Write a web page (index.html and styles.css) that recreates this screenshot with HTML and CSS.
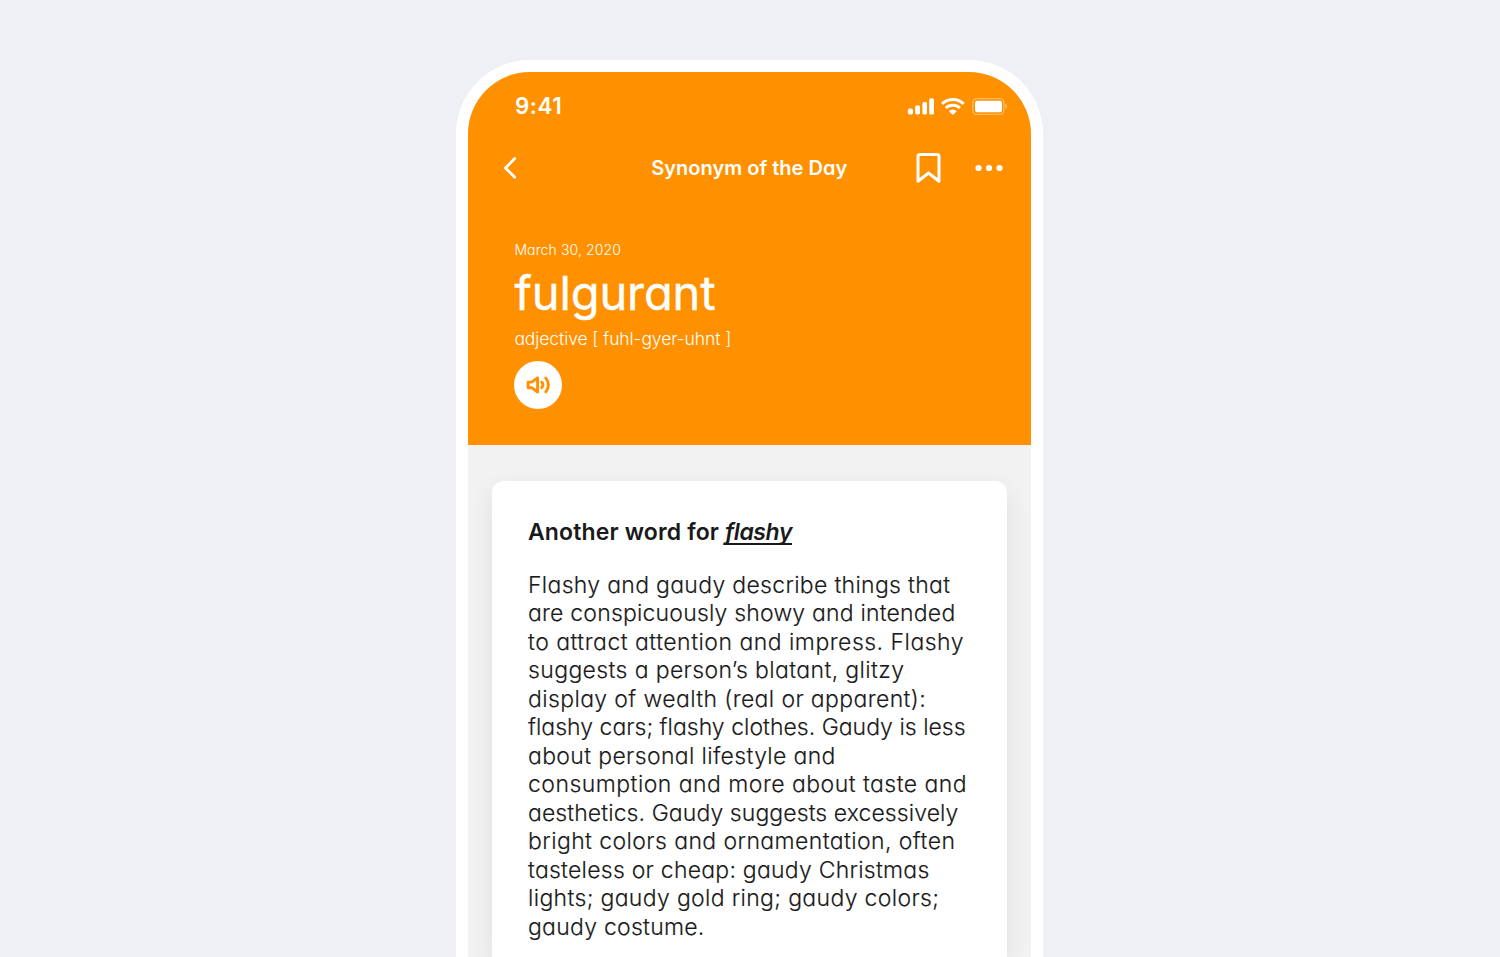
FILE: index.html
```html
<!DOCTYPE html>
<html lang="en">
<head>
<meta charset="utf-8">
<title>Synonym of the Day</title>
<link rel="stylesheet" href="styles.css">
</head>
<body>
<main class="phone">
  <header class="hero">
    <div class="status">
      <span class="time">9:41</span>
      <svg class="status-icons" width="102" height="20" viewBox="0 0 102 20" fill="#fff">
        <rect x="1.8" y="12.4" width="5.2" height="6.2" rx="1.8"/>
        <rect x="9.2" y="9.3" width="4.800" height="9.3" rx="1.8"/>
        <rect x="16.4" y="6" width="4.600" height="12.6" rx="1.7"/>
        <rect x="23.2" y="2.2" width="4.8" height="16.4" rx="1.7"/>
        <g fill="none" stroke="#fff" stroke-width="3">
          <path d="M36 7.800a15.800 15.800 0 0 1 21.700 0"/>
          <path d="M39.800 12a10.200 10.200 0 0 1 14.100 0"/>
        </g>
        <path d="M42.800 15.200a5.800 5.800 0 0 1 8 0L46.800 19z"/>
        <rect x="66.8" y="2.6" width="31" height="15.8" rx="4" fill="none" stroke="#fff" stroke-opacity=".38" stroke-width="1.4"/>
        <rect x="69" y="4.8" width="27" height="11.4" rx="2.2"/>
        <path d="M99.3 7.6c2.3 1 2.3 4.6 0 5.600z" fill-opacity=".42"/>
      </svg>
    </div>
    <nav class="nav">
      <svg class="back" width="16" height="26" viewBox="0 0 16 26" fill="none" stroke="#fff" stroke-width="2.800" stroke-linecap="round" stroke-linejoin="round"><path d="M12.700 3.600L3.500 13l9.200 9.300"/></svg>
      <h1 class="title">Synonym of the Day</h1>
      <div class="actions">
        <svg width="27" height="32" viewBox="0 0 27 32" fill="none" stroke="#fff" stroke-width="3" stroke-linejoin="round"><path d="M5 2.500h17q2 0 2 2v24.700l-10.500-8.200L3 29.200V4.500q0-2 2-2z"/></svg>
        <svg width="28" height="8" viewBox="0 0 28 8" fill="#fff"><circle cx="3.500" cy="4" r="3.100"/><circle cx="14" cy="4" r="3.100"/><circle cx="24.500" cy="4" r="3.100"/></svg>
      </div>
    </nav>
    <section class="entry">
      <p class="date">March 30, 2020</p>
      <h2 class="word">fulgurant</h2>
      <p class="pron">adjective [ fuhl-gyer-uhnt ]</p>
      <button class="sound" aria-label="Listen">
        <svg width="24" height="20" viewBox="0 0 24 20" fill="none" stroke="#ff9100" stroke-width="2.900" stroke-linecap="round" stroke-linejoin="round"><path d="M2.100 7.100h3.600l5.900-4.300v14.200l-5.900-4.300H2.100z"/><path d="M15.800 7.200q2.300 2.700 0 5.400M19.800 3q5.200 6.900 0 13.800"/></svg>
      </button>
    </section>
  </header>
  <article class="card">
    <h3 class="heading">Another word for <em class="term">flashy</em></h3>
    <p class="body">
      <span class="line l1">Flashy and gaudy describe things that</span>
      <span class="line l2">are conspicuously showy and intended</span>
      <span class="line l3">to attract attention and impress. Flashy</span>
      <span class="line l4">suggests a person’s blatant, glitzy</span>
      <span class="line l5">display of wealth (real or apparent):</span>
      <span class="line l6">flashy cars; flashy clothes. Gaudy is less</span>
      <span class="line l7">about personal lifestyle and</span>
      <span class="line l8">consumption and more about taste and</span>
      <span class="line l9">aesthetics. Gaudy suggests excessively</span>
      <span class="line l10">bright colors and ornamentation, often</span>
      <span class="line l11">tasteless or cheap: gaudy Christmas</span>
      <span class="line l12">lights; gaudy gold ring; gaudy colors;</span>
      <span class="line l13">gaudy costume.</span>
    </p>
  </article>
</main>
</body>
</html>
```
FILE: styles.css
```css
* { box-sizing: border-box; margin: 0; padding: 0; }
body {
  height: 957px;
  overflow: hidden;
  padding: 60px 0 0 456px;
  background: #eff0f5;
  font-family: Inter, sans-serif;
  font-feature-settings: "cv11";
  color: #1a1a1a;
}
.phone {
  display: flex;
  flex-direction: column;
  width: 586.5px;
  height: 897px;
  border: 12px solid #fff;
  border-bottom: 0;
  border-radius: 74px 74px 0 0;
  background: #f2f2f2;
  overflow: hidden;
}
.hero {
  flex: none;
  height: 373.4px;
  background: #ff9100;
  color: #fff;
}
.status {
  display: flex;
  align-items: center;
  justify-content: space-between;
  height: 68px;
  padding: 0 22.5px 0 47px;
}
.time { padding-bottom: 1px; font-size: 22.4px; font-weight: 600; letter-spacing: .5px; }
.nav {
  display: grid;
  grid-template-columns: 1fr auto 1fr;
  align-items: center;
  height: 56px;
  padding: 0 28px 0 33.5px;
}
.title { padding: 1.500px 5.500px 0 0; font-size: 20px; font-weight: 600; line-height: 25px; white-space: nowrap; }
.actions { display: flex; align-items: center; justify-content: flex-end; gap: 32.7px; }
.entry { padding: 44px 46.4px 0; }
.date { font-size: 14px; line-height: 20px; font-weight: 300; letter-spacing: .12px; }
.word { font-size: 47px; line-height: 66px; font-weight: 430; letter-spacing: -.1px; -webkit-text-stroke: .4px #fff; }
.pron { font-size: 17.5px; line-height: 25px; font-weight: 300; letter-spacing: -.09px; }
.sound {
  display: flex;
  align-items: center;
  justify-content: center;
  width: 48px;
  height: 48px;
  margin-top: 10.400px;
  border: 0;
  border-radius: 50%;
  background: #fff;
}
.card {
  flex: 1;
  margin: 36px 24px 0;
  padding: 35px 36px 0;
  border-radius: 12px 12px 0 0;
  background: #fff;
  box-shadow: 0 8px 24px rgba(0, 0, 0, .08);
}
.heading { font-size: 23px; line-height: 32px; font-weight: 600; letter-spacing: .14px; white-space: nowrap; }
.term {
  letter-spacing: -.4px;
  text-decoration: underline;
  text-decoration-thickness: 2px;
  text-decoration-skip-ink: none;
  text-underline-offset: 3px;
}
.body { margin-top: 22.200px; font-size: 23px; line-height: 28.530px; font-weight: 300; -webkit-text-stroke: .15px #1a1a1a; }
.line { display: block; white-space: nowrap; }
.l1 { letter-spacing: .3px; }
.l2 { letter-spacing: .19px; }
.l3 { letter-spacing: .48px; }
.l4 { letter-spacing: .37px; }
.l5 { letter-spacing: .37px; }
.l6 { letter-spacing: .01px; }
.l7 { letter-spacing: .34px; }
.l8 { letter-spacing: .46px; }
.l9 { letter-spacing: .08px; }
.l10 { letter-spacing: .4px; }
.l11 { letter-spacing: .24px; }
.l12 { letter-spacing: .33px; }
.l13 { letter-spacing: .25px; }
```
